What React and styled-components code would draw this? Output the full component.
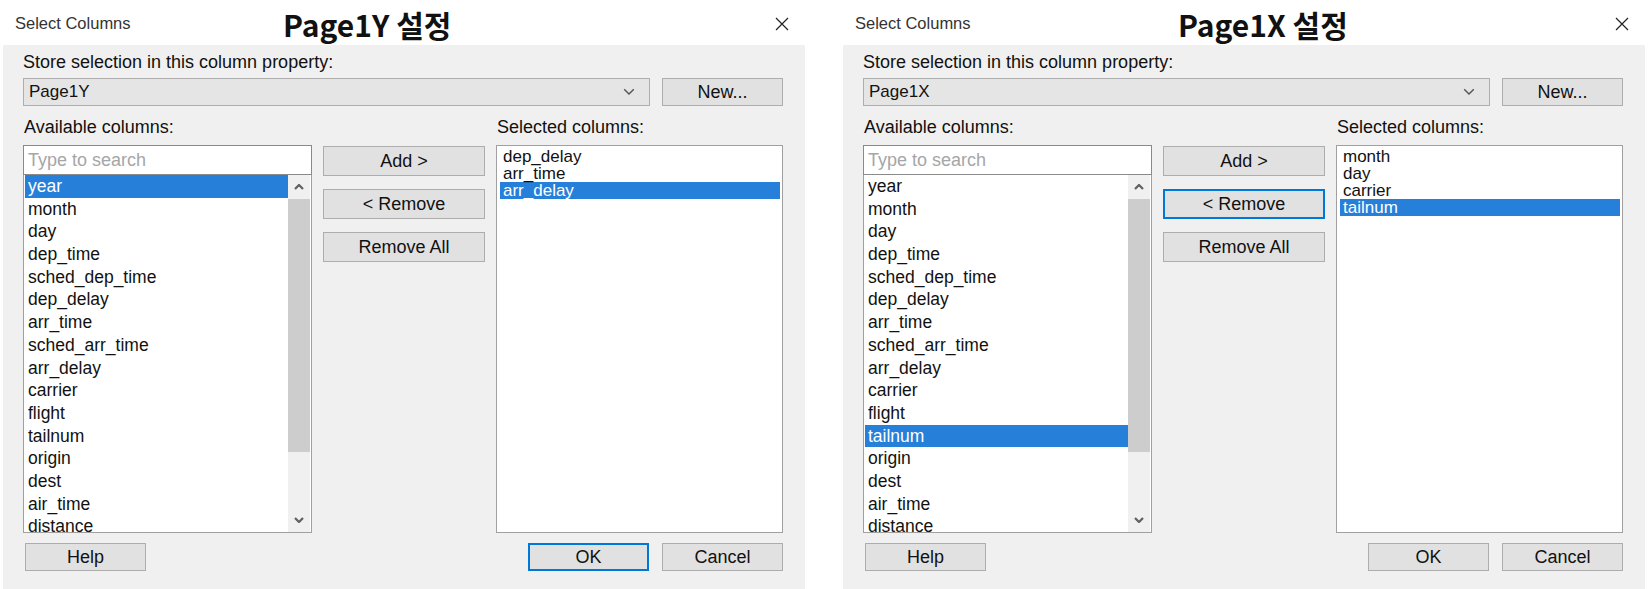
import styled, { createGlobalStyle } from "styled-components";

const GlobalStyle = createGlobalStyle`
  body {
    margin: 0;
    background: #fff;
    font-family: "Liberation Sans", Arial, sans-serif;
  }
`;

const Page = styled.div`
  display: flex;
  gap: 38px;
  padding: 2px 0 0 3px;
  width: 1649px;
  height: 589px;
  box-sizing: border-box;
  overflow: hidden;
`;

const Dialog = styled.div`
  width: 802px;
  flex-shrink: 0;
  display: flex;
  flex-direction: column;
  background: #f0f0f0;
`;

const TitleBar = styled.div`
  position: relative;
  height: 43px;
  background: #fff;
  display: flex;
  align-items: center;
  padding-left: 12px;
`;

const WindowTitle = styled.span`
  font-size: 16.5px;
  color: #333;
`;

const Caption = styled.span`
  position: absolute;
  left: ${(p) => p.$left}px;
  top: 0;
  font-family: "Noto Sans CJK KR", "Noto Sans", sans-serif;
  font-weight: 700;
  font-size: 30px;
  color: #111;
`;

const CloseButton = styled.div`
  margin-left: auto;
  width: 46px;
  height: 43px;
  display: flex;
  align-items: center;
  justify-content: center;
`;

const Body = styled.div`
  flex: 1;
  padding: 7px 22px 0 20px;
  font-size: 18px;
  color: #111;
`;

const Label = styled.div`
  height: 20px;
  line-height: 20px;
  padding-left: ${(p) => p.$indent || 0}px;
  white-space: nowrap;
`;

const ComboRow = styled.div`
  display: flex;
  gap: 12px;
  margin-top: 6px;
`;

const Combo = styled.div`
  width: 627px;
  height: 28px;
  box-sizing: border-box;
  border: 1px solid #adadad;
  background: #e5e5e5;
  display: flex;
  align-items: center;
  justify-content: space-between;
  padding: 0 14px 0 5px;
  font-size: 17px;
`;

const Button = styled.div`
  width: ${(p) => p.$width || 121}px;
  height: ${(p) => p.$height || 28}px;
  box-sizing: border-box;
  border: ${(p) => (p.$focused ? "2px solid #0078d7" : "1px solid #adadad")};
  background: #e1e1e1;
  display: flex;
  align-items: center;
  justify-content: center;
  white-space: nowrap;
`;

const Columns = styled.div`
  display: grid;
  grid-template-columns: 289px 162px 287px;
  grid-template-rows: 20px 388px;
  column-gap: 11px;
  row-gap: 8px;
  margin-top: 11px;
`;

const LeftStack = styled.div`
  display: flex;
  flex-direction: column;
`;

const SearchBox = styled.div`
  height: 30px;
  box-sizing: border-box;
  border: 1px solid #8a8a8a;
  background: #fff;
  padding: 0 4px;
  display: flex;
  align-items: center;
  color: #a6a6a6;
`;

const ListBox = styled.div`
  flex: 1;
  min-height: 0;
  box-sizing: border-box;
  border: 1px solid #a0a0a0;
  border-top: none;
  background: #fff;
  display: flex;
`;

const Items = styled.div`
  flex: 1;
  overflow: hidden;
  padding: 0 0 0 1px;
`;

const Row = styled.div`
  height: ${(p) => p.$h}px;
  line-height: ${(p) => p.$h}px;
  padding-left: 3px;
  font-size: ${(p) => p.$size}px;
  white-space: nowrap;
  background: ${(p) => (p.$selected ? "#2680d9" : "transparent")};
  color: ${(p) => (p.$selected ? "#fff" : "#111")};
`;

const ScrollBar = styled.div`
  width: 22px;
  margin-right: 1px;
  display: flex;
  flex-direction: column;
  background: #f0f0f0;
`;

const Arrow = styled.div`
  height: 24px;
  display: flex;
  align-items: center;
  justify-content: center;
`;

const Thumb = styled.div`
  height: 253px;
  background: #cdcdcd;
`;

const Track = styled.div`
  flex: 1;
`;

const ButtonStack = styled.div`
  display: flex;
  flex-direction: column;
  gap: 13px;
  padding-top: 1px;
`;

const SelectedBox = styled.div`
  box-sizing: border-box;
  border: 1px solid #a0a0a0;
  background: #fff;
  padding: 2px 2px 0 3px;
`;

const Footer = styled.div`
  display: flex;
  margin-top: 10px;
  padding-left: 2px;
`;

const FooterRight = styled.div`
  margin-left: auto;
  display: flex;
  gap: 13px;
`;

const Chevron = ({ up, size = 10, stroke = 2.2, color = "#606060" }) => (
  <svg width={size} height={size * 0.6} viewBox="0 0 10 6">
    <path
      d={up ? "M1 5 L5 1 L9 5" : "M1 1 L5 5 L9 1"}
      fill="none"
      stroke={color}
      strokeWidth={stroke}
    />
  </svg>
);

const CloseIcon = () => (
  <svg width="14" height="14" viewBox="0 0 14 14">
    <path d="M1 1 L13 13 M13 1 L1 13" stroke="#222" strokeWidth="1.2" />
  </svg>
);

const available = [
  "year", "month", "day", "dep_time", "sched_dep_time", "dep_delay",
  "arr_time", "sched_arr_time", "arr_delay", "carrier", "flight",
  "tailnum", "origin", "dest", "air_time", "distance", "hour", "minute",
];

const SelectColumns = ({ property, captionLeft, selected, activeAvailable, focus }) => (
  <Dialog>
    <TitleBar>
      <WindowTitle>Select Columns</WindowTitle>
      <Caption $left={captionLeft}>{property} 설정</Caption>
      <CloseButton>
        <CloseIcon />
      </CloseButton>
    </TitleBar>
    <Body>
      <Label $indent={-2}>Store selection in this column property:</Label>
      <ComboRow>
        <Combo>
          <span>{property}</span>
          <Chevron size={12} stroke={1.2} color="#555" />
        </Combo>
        <Button>New...</Button>
      </ComboRow>
      <Columns>
        <Label $indent={1}>Available columns:</Label>
        <div />
        <Label $indent={1}>Selected columns:</Label>
        <LeftStack>
          <SearchBox>Type to search</SearchBox>
          <ListBox>
            <Items>
              {available.map((c) => (
                <Row key={c} $h={22.7} $size={17.5} $selected={c === activeAvailable}>
                  {c}
                </Row>
              ))}
            </Items>
            <ScrollBar>
              <Arrow>
                <Chevron up />
              </Arrow>
              <Thumb />
              <Track />
              <Arrow>
                <Chevron />
              </Arrow>
            </ScrollBar>
          </ListBox>
        </LeftStack>
        <ButtonStack>
          <Button $width={162} $height={30}>Add &gt;</Button>
          <Button $width={162} $height={30} $focused={focus === "remove"}>
            &lt; Remove
          </Button>
          <Button $width={162} $height={30}>Remove All</Button>
        </ButtonStack>
        <SelectedBox>
          {selected.map((c, i) => (
            <Row key={c} $h={17} $size={17} $selected={i === selected.length - 1}>
              {c}
            </Row>
          ))}
        </SelectedBox>
      </Columns>
      <Footer>
        <Button>Help</Button>
        <FooterRight>
          <Button $focused={focus === "ok"}>OK</Button>
          <Button>Cancel</Button>
        </FooterRight>
      </Footer>
    </Body>
  </Dialog>
);

const App = () => (
  <>
    <GlobalStyle />
    <Page>
      <SelectColumns
        property="Page1Y"
        captionLeft={280}
        selected={["dep_delay", "arr_time", "arr_delay"]}
        activeAvailable="year"
        focus="ok"
      />
      <SelectColumns
        property="Page1X"
        captionLeft={335}
        selected={["month", "day", "carrier", "tailnum"]}
        activeAvailable="tailnum"
        focus="remove"
      />
    </Page>
  </>
);

export default App;
